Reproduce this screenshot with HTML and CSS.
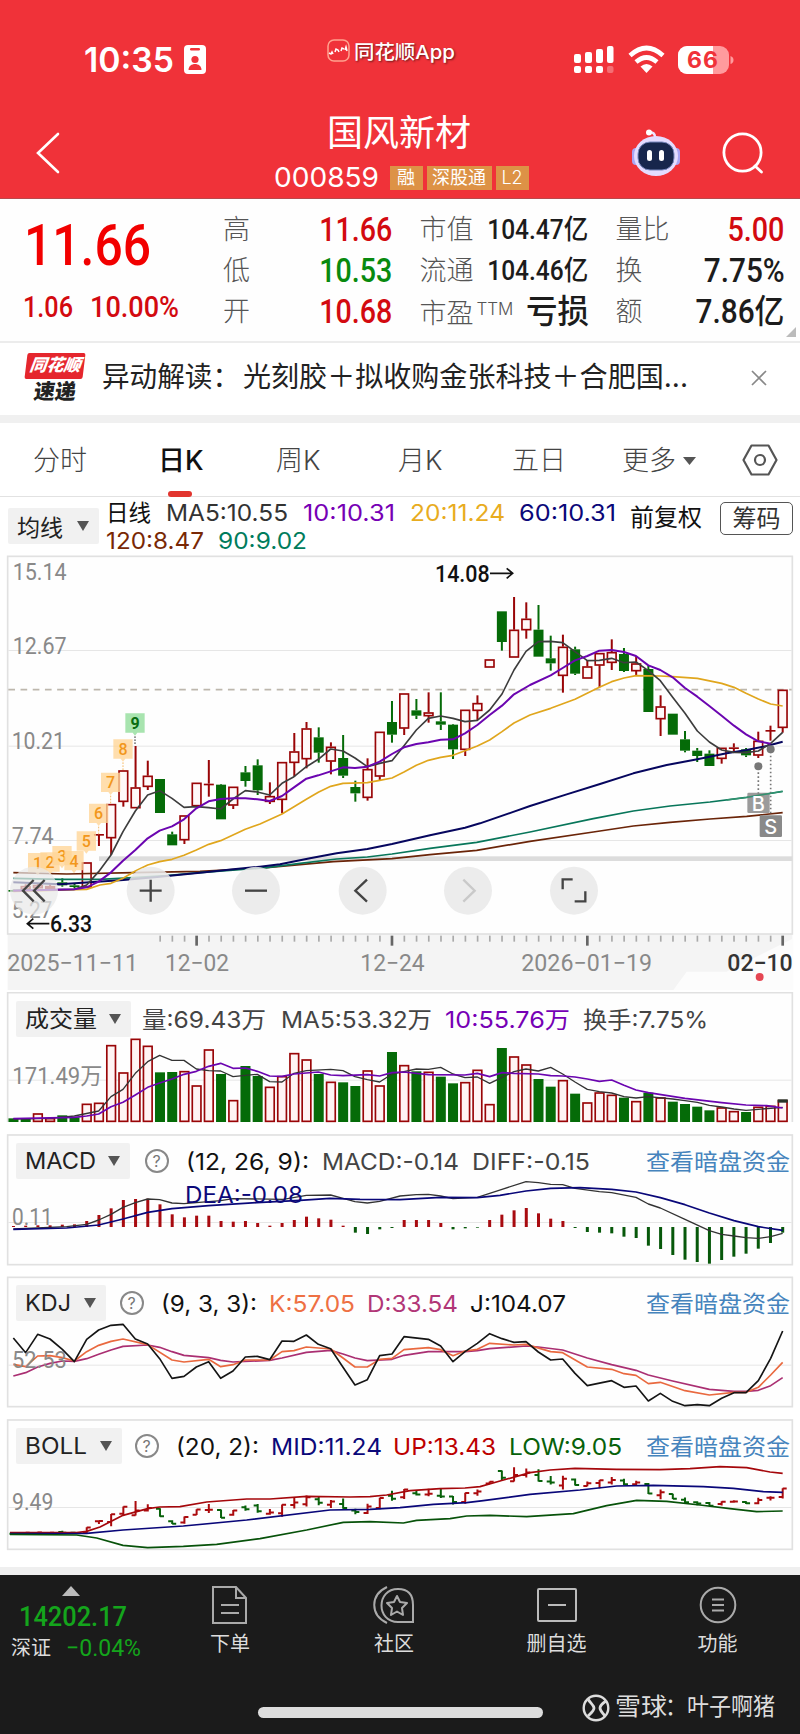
FILE: index.html
```html
<!DOCTYPE html>
<html lang="zh-CN">
<head>
<meta charset="utf-8">
<title>国风新材 000859</title>
<link rel="stylesheet" href="styles.css">
</head>
<body>
<header class="top">
  <div class="status">
    <span class="time" data-w="90">10:35</span>
    <svg class="idcard" width="22" height="29" viewBox="0 0 22 29"><rect width="22" height="29" rx="4" fill="#fff"/><rect x="6" y="3" width="10" height="2.4" rx="1.2" fill="#f03239"/><circle cx="11" cy="14.5" r="3.6" fill="#f03239"/><path d="M4.5 25c0-8 13-8 13 0z" fill="#f03239"/></svg>
    <span class="brand">
      <svg width="23" height="23" viewBox="0 0 23 23"><rect x="1" y="1" width="21" height="21" rx="6" fill="none" stroke="#ffa28f" stroke-width="1.5"/><path d="M2 14l2 1 1-2 1 2M8 13l1-3 2 1 1 2M14 12l1-3 2 1M18 11l1-3 1 4" fill="none" stroke="#fff" stroke-width="1.5"/></svg>
      <span data-w="101">同花顺App</span>
    </span>
    <svg class="signals" width="160" height="30" viewBox="0 0 160 30">
      <g fill="#fff"><rect x="0" y="9" width="7" height="9" rx="2"/><rect x="11" y="7" width="7" height="11" rx="2"/><rect x="22" y="4" width="7" height="14" rx="2"/><rect x="33" y="1" width="6.500" height="17" rx="2"/><rect x="0" y="21" width="7" height="7" rx="2"/><rect x="11" y="21" width="7" height="7" rx="2"/><rect x="22" y="21" width="7" height="7" rx="2"/><rect x="33" y="21" width="6.500" height="7" rx="2" opacity=".3"/></g>
      <g fill="none" stroke="#fff" stroke-width="4.6"><path d="M56 10.500q16.500-15 33 0M62 17q10.500-9 21 0"/></g><path d="M66.500 21.500q6-5 12 0L72.500 28z" fill="#fff"/>
      <rect x="104" y="1" width="51" height="28" rx="9" fill="#ff9b9d"/><path d="M113 1h26v28h-26a9 9 0 0 1-9-9v-10a9 9 0 0 1 9-9z" fill="#fff"/><path d="M156.500 11q3 1 3 4t-3 4z" fill="#ff9b9d"/>
      <text x="113" y="23" font-size="23" font-weight="700" fill="#f03239" textLength="31" font-family="Inter">66</text>
    </svg>
  </div>
  <div class="titlebar">
    <svg class="back" width="24" height="42" viewBox="0 0 24 42"><path d="M22 2L2 21l20 19" fill="none" stroke="#fff" stroke-width="2.600" stroke-linecap="round"/></svg>
    <div class="title">
      <h1>国风新材</h1>
      <div class="code"><span class="num" data-w="105">000859</span><i class="w1">融</i><i class="w3">深股通</i><i class="w1 l2">L2</i></div>
    </div>
    <svg class="robot" width="50" height="48" viewBox="0 0 50 48"><path d="M24 8q0-5-6-5" fill="none" stroke="#eee4ff" stroke-width="2.400"/><circle cx="18" cy="3.500" r="3" fill="#fff"/><rect x="1" y="19" width="9" height="17" rx="4" fill="#a9a5f4"/><rect x="40" y="19" width="9" height="17" rx="4" fill="#a9a5f4"/><ellipse cx="25" cy="27" rx="22" ry="20" fill="#e4dcff"/><rect x="7" y="13" width="36" height="28" rx="12" fill="#17264c" stroke="#7888bd"/><rect x="16" y="21" width="5" height="11" rx="2.500" fill="#fff"/><rect x="28" y="21" width="5" height="11" rx="2.500" fill="#fff"/></svg>
    <svg class="search" width="42" height="42" viewBox="0 0 42 42"><g fill="none" stroke="#fff" stroke-width="2.800" stroke-linecap="round"><circle cx="20.500" cy="20.500" r="18.600"/><path d="M33 34l6.500 6"/></g></svg>
  </div>
</header>

<section class="quote">
  <div class="price">
    <strong data-w="127">11.66</strong>
    <div class="chg"><span data-w="50">1.06</span><span data-w="89">10.00%</span></div>
  </div>
  <dl class="stats">
    <dt>高</dt><dd class="red" data-w="73">11.66</dd><dt>市值</dt><dd class="mid" data-w="101">104.47亿</dd><dt>量比</dt><dd class="red" data-w="57">5.00</dd>
    <dt>低</dt><dd class="green" data-w="73">10.53</dd><dt>流通</dt><dd class="mid" data-w="101">104.46亿</dd><dt>换</dt><dd data-w="81">7.75%</dd>
    <dt>开</dt><dd class="red" data-w="73">10.68</dd><dt>市盈<small>TTM</small></dt><dd data-w="63">亏损</dd><dt>额</dt><dd data-w="89">7.86亿</dd>
  </dl>
  <svg class="corner" width="10" height="10"><path d="M10 0v10H0z" fill="#bbb"/></svg>
</section>

<section class="news">
  <div class="express"><b>同花顺</b><em>速递</em></div>
  <span class="headline"><span data-w="138">异动解读：</span><span data-w="445">光刻胶＋拟收购金张科技＋合肥国...</span></span>
  <svg width="16" height="16" viewBox="0 0 16 16"><path d="M1 1l14 14M15 1L1 15" stroke="#888" stroke-width="1.700"/></svg>
</section>

<nav class="tabs">
  <span>分时</span><span class="on">日K</span><span>周K</span><span>月K</span><span>五日</span><span>更多<svg width="13" height="8"><path d="M0 0h13l-6.500 8z" fill="#555"/></svg></span>
  <svg width="36" height="32" viewBox="0 0 36 32"><path d="M9.500 1.500h17L34.500 16l-8 14.500h-17L1.500 16z" fill="none" stroke="#555" stroke-width="2.200" stroke-linejoin="round"/><circle cx="18" cy="16" r="5" fill="none" stroke="#555" stroke-width="2.200"/></svg>
</nav>

<section class="legend-ma">
  <button class="pick"><span data-w="46">均线</span><i></i></button>
  <div class="ma">
    <div class="ma-row"><span class="k" data-w="45">日线</span><span data-w="122">MA5:10.55</span><span class="purple" data-w="92">10:10.31</span><span class="gold" data-w="95">20:11.24</span><span class="navy" data-w="97">60:10.31</span></div>
    <div class="ma-row two"><span class="brown" data-w="98">120:8.47</span><span class="teal" data-w="89">90:9.02</span></div>
  </div>
  <span class="adj">前复权</span>
  <button class="chip">筹码</button>
</section>

<section class="chart kline"><svg id="k" viewBox="0 0 2400 1320" width="800" height="440"></svg></section>

<section class="chart vol">
  <svg id="v" viewBox="0 186 2400 408" width="800" height="136"></svg>
  <div class="legend"><button class="pick"><span data-w="72">成交量</span><i></i></button><span data-w="124">量:69.43万</span><span data-w="151">MA5:53.32万</span><span class="purple" data-w="125">10:55.76万</span><span data-w="125">换手:7.75%</span></div>
</section>

<section class="chart macd">
  <svg id="m" viewBox="0 12 2400 396" width="800" height="132"></svg>
  <div class="legend"><button class="pick"><span data-w="71">MACD</span><i></i></button><u>?</u><span class="k" data-w="123">(12, 26, 9):</span><span data-w="137">MACD:-0.14</span><span data-w="118">DIFF:-0.15</span><a data-w="144">查看暗盘资金</a></div>
  <span class="dea" data-w="118">DEA:-0.08</span>
</section>

<section class="chart kdj">
  <svg id="j" viewBox="0 438 2400 396" width="800" height="132"></svg>
  <div class="legend"><button class="pick"><span data-w="46">KDJ</span><i></i></button><u>?</u><span class="k" data-w="96">(9, 3, 3):</span><span class="orange" data-w="86">K:57.05</span><span class="pink" data-w="91">D:33.54</span><span class="k" data-w="96">J:104.07</span><a data-w="144">查看暗盘资金</a></div>
</section>

<section class="chart boll">
  <svg id="b" viewBox="0 867 2400 396" width="800" height="132"></svg>
  <div class="legend"><button class="pick"><span data-w="62">BOLL</span><i></i></button><u>?</u><span class="k" data-w="83">(20, 2):</span><span class="navy" data-w="111">MID:11.24</span><span class="crimson" data-w="103">UP:13.43</span><span class="dgreen" data-w="113">LOW:9.05</span><a data-w="144">查看暗盘资金</a></div>
</section>

<footer class="dock">
  <div class="index">
    <svg width="18" height="10"><path d="M9 0l9 10H0z" fill="#bbb"/></svg>
    <b data-w="108">14202.17</b>
    <p><span>深证</span><em data-w="75">−0.04%</em></p>
  </div>
  <div class="item"><svg width="42" height="38" viewBox="0 0 42 38"><g fill="none" stroke="#aaa" stroke-width="2"><path d="M4 1h23l10 11v25H4zM27 1v11h10M12 19h18M12 27h18"/></g></svg>下单</div>
  <div class="item"><svg width="42" height="38" viewBox="0 0 42 38"><g fill="none" stroke="#aaa" stroke-width="2"><path d="M40 36H25C3 36 3 3 25 3c11 0 15 7 15 16zM14 1C-3 9-3 29 14 37"/><path d="M24 10l3 6 7 1-5 5 1 7-6-3.500-6 3.500 1-7-5-5 7-1z" stroke-linejoin="round"/></g></svg>社区</div>
  <div class="item"><svg width="42" height="38" viewBox="0 0 42 38"><g fill="none" stroke="#bbb" stroke-width="2"><rect x="2" y="3" width="38" height="32" rx="1"/><path d="M12 19h18"/></g></svg>删自选</div>
  <div class="item"><svg width="42" height="38" viewBox="0 0 42 38"><g fill="none" stroke="#aaa" stroke-width="2"><circle cx="21" cy="19" r="17.300"/><path d="M15 13.500h12M15 19h12M15 24.500h12"/></g></svg>功能</div>
  <div class="home"></div>
  <div class="author"><svg width="28" height="28" viewBox="0 0 28 28"><g fill="none" stroke="#ddd"><circle cx="14" cy="14" r="12.300" stroke-width="2.400"/><path d="M6 5c2 4 6 6 6 9s-3 5-6 8M24 7c-3 2-6 4-6 7s3 5 5 8" stroke-width="2.800"/></g></svg><b data-w="52">雪球</b><span data-w="110">：叶子啊猪</span></div>
</footer>
<script src="app.js"></script>
</body>
</html>
```

FILE: styles.css
```css
*{box-sizing:border-box}
body{margin:0;width:800px;background:#fff;color:#222;font-family:Inter,"Noto Sans CJK SC",sans-serif}
svg{display:block;flex:none}
button{border:0;padding:0;margin:0;font:inherit;color:inherit;background:none}
i,em{font-style:normal}
[data-w]{display:inline-block;white-space:nowrap;transform-origin:left center}
.top{height:199px;background:#f03239;color:#fff;border-bottom:1px solid #b9494c}
.status{height:112px;padding:45px 0 0 84px;display:flex;align-items:flex-start}
.time{width:90px;font-size:34px;font-weight:600;line-height:30px}
.idcard{margin-left:10px}
.brand{margin:-8px 0 0 121px;display:flex;align-items:center;gap:4px;width:246px;height:26px;font-size:19px;font-weight:500;text-shadow:1px 1px 2px #0008}
.status .signals{margin-left:1px}
.titlebar{display:flex;align-items:flex-start;padding-left:36px}
.back{margin-top:20px}
.title{width:400px;margin-left:139px;text-align:center}
h1{margin:0;font-size:36px;line-height:42px;font-weight:400}
.code{display:flex;justify-content:center;align-items:center;height:24px;margin:12px 0 0 8px}
.code .num{width:106px;font-size:27px;line-height:24px;text-align:left;margin-right:10px}
.code i{height:24px;background:#dd9246;font-size:18px;line-height:23px;margin-right:4px}
.w1{width:33px}.w3{width:65px}
.l2{font-weight:300}
.robot{margin:17px 0 0 32px}
.search{margin:20px 0 0 41px}
.quote{position:relative;height:144px;border-bottom:2px solid #ececec;display:flex;background:#fefefe}
.price{width:223px;padding:15px 0 0 24px;color:#f20000;font-family:Roboto,sans-serif}
.price strong{display:block;width:max-content;font-size:57px;line-height:64px;font-weight:500}
.chg{display:grid;grid-template-columns:67px 100px;justify-items:start;margin:14px 0 0 -1px;font-size:29px;line-height:30px;color:#d30a10;font-weight:500}
.stats{margin:10px 0 0;display:grid;grid-template-columns:80px 89.5px 106px 90px 106px 90px;grid-auto-rows:41px;column-gap:0;align-items:center;align-content:start}
.stats dt{font-size:27px;color:#555;font-weight:300;white-space:nowrap;line-height:40px}
.stats dt:nth-of-type(3n+2),.stats dt:nth-of-type(3n){padding-left:27px}
.stats dt small{font-size:17px;vertical-align:8px;margin-left:3px}
.stats dd{margin:0;justify-self:end;transform-origin:right center;font:500 33px/40px Roboto,"Noto Sans CJK SC",sans-serif;color:#1c1c1c}
.stats dd.mid{font-size:27px}
.stats dd.red{color:#d30a10}.stats dd.green{color:#088a0e}
.corner{position:absolute;right:4px;bottom:4px}
.news{height:72px;display:flex;align-items:center;padding:0 0 3px 25px}
.express{width:60px;margin-right:17px;text-align:center;font-style:italic;font-weight:900}
.express b{display:block;height:26px;margin:0 1px;border-radius:2px;background:#e5262d;color:#fff;transform:skewX(-7deg);font-size:17px;line-height:25px}
.express em{display:block;font-size:21px;line-height:22px;transform:skewX(-8deg);color:#222;padding-top:2px}
.headline{width:649px;font-size:28px;line-height:40px;margin-top:-2px;display:grid;grid-template-columns:141px 500px;justify-items:start}
.tabs{height:82px;border-top:8px solid #f0f0f0;border-bottom:1px solid #e2e2e2;display:grid;grid-template-columns:125px 118px 122px 114px 110px 120px 40px;align-items:center;padding-left:33px;font-size:27px;font-weight:300;color:#444}
.tabs span{display:flex;align-items:center;gap:7px;position:relative;line-height:42px;padding-top:2px}
.tabs .on{font-weight:500;color:#111}
.tabs .on::after{content:"";position:absolute;left:10px;bottom:-15px;width:24px;height:6px;border-radius:3px;background:#e2352e}
.legend-ma{height:59px;display:flex;padding-left:8px;color:#333;font-size:23px}
.pick{display:flex;align-items:center;justify-content:space-between;background:#f1f1f1;border-radius:2px;padding:0 9px 0 9px;height:36px;color:#222;font-size:23px;text-align:left}
.pick i{width:0;border:6.500px solid transparent;border-top:10px solid #555;border-bottom:0;transform:translateX(-1px)}
.legend-ma .pick{width:91px;margin-top:11px}
.ma{width:531px;padding:1px 0 0 7px}
.ma-row{display:grid;grid-template-columns:60px 137px 107px 109px 100px;justify-items:start;line-height:30px;height:28px}
.ma-row.two{grid-template-columns:112px 100px;line-height:31px}
.adj{font-size:24px;line-height:42px;color:#111}
.chip{margin:5px 0 0 18px;width:73px;height:33px;border:1.500px solid #555;border-radius:5px;font-size:24px;line-height:28px}
.k{color:#111}.purple{color:#7600b5}.gold{color:#e8ac1f}.navy{color:#0b0879}.brown{color:#792805}.teal{color:#007c5c}.orange{color:#ee7043}.pink{color:#b13677}.crimson{color:#bd0000}.dgreen{color:#07610a}
.chart{position:relative}
.chart>svg{position:absolute;left:0;top:0}
.kline{height:436px}.kline>svg{top:-6px}
.vol{height:142px}.macd{height:142px}.kdj{height:143px}.boll{height:148px}
.legend{position:relative;display:grid;align-items:center;justify-items:start;margin-left:15.500px;height:36px;top:9px;font-size:23px;color:#444;line-height:34px}
.legend>[data-w]{padding-top:2px}
.legend .pick{justify-self:stretch}
.legend u{width:24px;height:24px;border:2px solid #888;border-radius:50%;text-decoration:none;font-size:16px;line-height:20px;text-align:center;color:#777}
.legend a{color:#4684bd}
.vol .legend{grid-template-columns:115px 11px 139px 164px 138px 130px}
.vol .legend>:nth-child(n+2){grid-row:1}
.vol .legend>:nth-child(2){grid-column:3}.vol .legend>:nth-child(3){grid-column:4}.vol .legend>:nth-child(4){grid-column:5}.vol .legend>:nth-child(5){grid-column:6}
.macd .pick{width:114px}.kdj .pick{width:90px}.boll .pick{width:106px}
.macd .legend{grid-template-columns:129px 41px 136px 150px 174px 144px}
.kdj .legend{grid-template-columns:104px 41px 108px 98px 103px 176px 144px}
.boll .legend{grid-template-columns:119px 41px 95px 122px 116px 137px 144px}
.dea{position:absolute;left:185px;top:45px;font-size:23px;line-height:32px;color:#0b0879}
.dock{position:relative;height:167px;border-top:8px solid #efefef;background:#1b1b1b;display:grid;grid-template-columns:148px 164px 164px 161px 161px;color:#ddd;font-size:20px}
.index{padding:11px 0 0 11px;color:#14a51c;font-family:Roboto,"Noto Sans CJK SC",sans-serif}
.index svg{margin-left:51px}
.index b{font-size:27px;font-weight:500;line-height:30px;margin:6px 0 0 8px}
.index p{margin:0;display:flex;line-height:32px}
.index p span{color:#ddd;width:55px}.index em{font-size:24px}
.item{display:flex;flex-direction:column;align-items:center;padding-top:11px;line-height:41px}
.home{position:absolute;left:258px;top:132px;width:285px;height:11px;border-radius:6px;background:#ddd}
.author{position:absolute;left:582px;top:119px;display:flex;align-items:center;height:28px;line-height:26px;font-size:24px}
.author b{margin:-2px 0 0 5px;width:50px;font-weight:400}
.author span{margin-top:-2px}
svg .ax{font-family:Roboto,"Noto Sans CJK SC",sans-serif;font-size:69px;fill:#898989}
svg .ink{fill:#111;font-weight:500}
svg .dark{fill:#333}
```

FILE: app.js
```js
// Condense text to the advance width declared in data-w.
function fitText() {
  document.querySelectorAll('[data-w]').forEach(function (el) {
    var r = document.createRange();
    r.selectNodeContents(el);
    el.style.transform = 'scaleX(' + (el.dataset.w / r.getBoundingClientRect().width) + ')';
  });
}
fitText();

var RED = '#990507', GREEN = '#056b08';
function X(i) { return 40.4 + 36.63 * i; }
function put(id, s) { document.getElementById(id).innerHTML = s; }
function rect(x, y, w, h, a) { return '<rect x="' + x + '" y="' + y + '" width="' + w + '" height="' + h + '" ' + a + '/>'; }
function line(p, c, w) { return '<polyline points="' + p + '" fill="none" stroke="' + c + '" stroke-width="' + (w || 5) + '" stroke-linejoin="round"/>'; }
function text(t, x, y, w, c) { return '<text class="' + (c || 'ax') + '" x="' + x + '" y="' + y + '" textLength="' + w + '" lengthAdjust="spacingAndGlyphs">' + t + '</text>'; }
function frame(y1, y2) { return rect(23, y1, 2354, y2 - y1, 'fill="#fefefe" stroke="#e1e1e1" stroke-width="5"'); }
function grid(y) { return rect(25, y, 2350, 3, 'fill="#e6e6e6"'); }

// direction, high, body top, body bottom, low
var K = ('g 1019 1020 1024 1026,r 1003 1008 1018 1018,r 1000 1005 1014 1017,r 1003 1008 1016 1018,g 985 997 1006 1010,g 1000 1006 1010 1015,r 937 937 1012 1012,r 852 852 855 888,r 762 762 864 915,r 661 661 755 770,r 588 712 774 774,' +
'r 632 677 710 720,g 687 687 789 789,g 845 853 886 886,r 796 796 870 882,r 698 698 768 768,r 630 701 703 740,g 702 704 808 808,r 710 710 766 777,g 648 667 693 710,g 628 646 721 735,' +
'r 697 738 755 762,r 636 636 749 790,r 549 604 638 680,r 516 535 627 655,g 532 562 608 638,r 577 590 634 673,g 555 624 677 684,g 692 711 730 755,r 625 657 743 752,r 545 545 679 690,' +
'g 453 516 554 578,r 430 430 535 555,g 447 481 497 507,r 427 487 498 518,g 427 514 524 540,g 522 524 598 627,r 479 479 599 618,r 436 459 482 510,r 328 328 352 352,g 184 184 276 302,' +
'r 141 239 322 322,r 157 206 240 266,g 165 239 320 320,g 257 325 340 362,r 254 290 377 428,g 290 298 371 375,r 330 349 385 385,r 309 309 346 412,r 268 306 338 360,g 294 312 363 366,' +
'r 318 340 363 375,g 348 357 486 486,r 436 469 507 558,g 491 491 554 554,g 543 568 602 607,g 594 602 618 636,g 601 611 648 648,r 593 593 626 641,r 580 592 594 605,g 594 598 616 621,' +
'r 545 572 616 624,r 527 540 542 572,r 419 419 533 548').split(',').map(function (s) {
  var p = s.split(' '); return { d: p[0], h: +p[1], t: +p[2], b: +p[3], l: +p[4] };
});

// Main chart
(function () {
  var s = rect(23, 1152, 2354, 170, 'fill="#f4f4f4"') + '<path d="M2380 1165V1320H2020L2060 1265H2180z" fill="#fcfcfc"/>' + frame(19, 1152);
  [300, 587, 870].forEach(function (y) { s += grid(y); });
  s += '<path d="M25 419H2375" stroke="#bdb7ad" stroke-width="5" stroke-dasharray="20 16.600"/>';
  s += rect(297, 919, 2080, 14, 'fill="#dcdcdc"');
  K.forEach(function (k, i) {
    var x = X(i), c = k.d === 'r' ? RED : GREEN;
    if (k.h < k.t) s += rect(x - 3, k.h, 6, k.t - k.h, 'fill="' + c + '"');
    if (k.l > k.b) s += rect(x - 3, k.b, 6, k.l - k.b, 'fill="' + c + '"');
    if (k.d === 'g' || k.b - k.t < 6) s += rect(x - 15, k.t, 30, Math.max(5, k.b - k.t), 'fill="' + c + '"');
    else s += rect(x - 13, k.t + 2, 26, k.b - k.t - 3, 'fill="#fff8f8" stroke="' + c + '" stroke-width="5"');
  });
  s += line('40,968 200,972 400,968 600,964 800,953 1000,935 1176,926 1290,914 1430,901 1590,874 1780,846 1900,828 2010,817 2130,807 2240,799 2348,788', '#6a2408');
  s += line('40,985 180,988 300,988 400,983 500,977 600,968 800,953 900,940 1010,927 1102,921 1176,912 1290,895 1430,877 1590,846 1780,806 1900,783 2010,768 2130,756 2240,742 2348,724', '#08765a');
  s += line('40,997 180,1003 370,990 480,980 600,968 700,958 780,950 840,943 930,925 1010,910 1102,897 1176,882 1290,856 1395,833 1440,820 1542,785 1590,768 1700,733 1800,702 1900,670 2000,645 2092,628 2180,610 2240,600 2300,588 2348,575', '#06065e', 6);
  s += line('40,1024 223,1019 260,1018 300,1005 333,1000 369,985 406,963 443,945 479,935 516,928 552,916 589,900 626,883 662,872 736,838 780,822 846,792 882,770 919,748 955,727 992,709 1029,700 1102,698 1139,691 1176,684 1212,666 1249,646 1285,631 1322,622 1359,616 1395,602 1432,588 1469,570 1506,545 1542,519 1590,495 1652,475 1725,448 1798,412 1835,395 1872,384 1908,377 1981,378 2018,380 2092,385 2165,400 2202,412 2238,430 2275,447 2312,462 2348,468', '#e0a61d');
  s += line('40,1021 223,1018 260,1005 296,965 333,915 369,845 406,783 443,735 479,722 516,745 552,772 589,770 626,773 662,777 699,747 736,722 772,726 809,735 846,700 882,680 919,650 955,628 992,597 1029,603 1065,624 1102,650 1139,640 1176,632 1212,587 1249,540 1285,505 1322,498 1359,505 1395,515 1432,511 1469,480 1506,432 1542,360 1578,304 1615,275 1652,274 1688,278 1725,305 1762,332 1798,331 1835,325 1872,338 1908,336 1945,362 1981,392 2018,442 2055,490 2092,543 2128,576 2165,600 2202,607 2238,608 2275,603 2312,580 2348,547', '#3d3d3d');
  s += line('40,1022 223,1018 260,1012 296,995 333,967 369,932 406,900 443,865 479,842 516,829 552,808 589,775 626,754 662,747 699,745 736,745 772,748 809,753 846,738 882,712 919,686 955,676 992,664 1029,652 1065,654 1102,650 1139,635 1176,612 1212,592 1249,582 1285,577 1322,569 1359,568 1395,550 1432,525 1469,495 1506,467 1542,433 1590,405 1652,376 1688,354 1725,331 1762,318 1798,302 1835,300 1872,306 1908,318 1945,346 1981,360 2018,382 2055,414 2092,440 2128,468 2165,497 2202,527 2238,553 2275,574 2312,581', '#6b05b0', 6);
  [[113, 938], [150, 936], [186, 917], [222, 932], [259, 873], [296, 790], [332, 697], [369, 597], [405, 519]].forEach(function (p, i) {
    var g = i === 8, x = p[0], y = p[1];
    s += '<path d="M' + (x - 29) + ' ' + (y - 29) + 'h58v58h-22l-7 9l-7-9h-22z" fill="' + (g ? '#8fdc99' : '#ffd596') + '" opacity=".78"/>';
    s += '<text x="' + x + '" y="' + (y + 18) + '" text-anchor="middle" font-family="Roboto" font-size="48" font-weight="' + (g ? 700 : 500) + '" fill="' + (g ? '#0a6d12' : '#f2971b') + '">' + (i + 1) + '</text>';
    if (i > 4) s += '<path d="M' + x + ' ' + (y + 40) + 'v24" stroke="' + (g ? '#333' : '#f5bb68') + '" stroke-width="3" stroke-dasharray="5 4"/>';
  });
  s += text('15.14', 38, 91, 162) + text('12.67', 38, 312, 162) + text('10.21', 35, 597, 160) + text('7.74', 35, 882, 126) + text('5.27', 35, 1105, 122);
  s += text('6.33', 150, 1145, 126, 'ax ink') + text('14.08', 1305, 95, 164, 'ax ink');
  s += '<path d="M148 1121H82m18-15L82 1121l18 15M1470 70h68m-18-15l18 15l-18 15" fill="none" stroke="#111" stroke-width="5"/>';
  // Trade markers
  s += '<g stroke="#777" stroke-width="5" stroke-dasharray="5 7"><path d="M2275 655v80M2312 605v190"/></g><circle cx="2275" cy="649" r="12" fill="#777"/><circle cx="2312" cy="598" r="12" fill="#777"/>';
  s += rect(2242, 728, 67, 61, 'rx="4" fill="#898989" opacity=".85"') + rect(2279, 796, 67, 65, 'rx="4" fill="#898989"');
  s += line('2180,750 2240,742 2348,724', '#31936f', 4);
  s += '<g font-family="Inter" font-size="60" font-weight="500" fill="#fff" text-anchor="middle"><text x="2275" y="783">B</text><text x="2312" y="852">S</text></g>';
  // Floating controls
  ['M65-32L33 0L65 32M32-32L0 0L32 32', 'M-33 0H33M0-33V33', 'M-33 0H33', 'M13-33L-22 0L13 33', 'M-14-33L20 0L-14 33', 'M-34-4V-34H-4M2 32H34V2'].forEach(function (d, i) {
    var x = [102, 452, 768, 1088, 1404, 1722][i];
    s += '<g transform="translate(' + x + ' 1022)"><circle r="72" fill="#e9e9e9" opacity="' + (i ? '.86' : '.72') + '"/><path d="' + d + '" transform="' + (i ? '' : 'translate(-33 0)') + '" fill="none" stroke="' + (i === 4 ? '#c9c9c9' : '#444') + '" stroke-width="7"/></g>';
  });
  for (var i = 12; i < 64; i++) {
    var major = i === 15 || i === 31 || i === 47 || i === 63;
    s += rect(X(i) - (major ? 4 : 2), 1157, major ? 8 : 5, major ? 30 : 18, 'fill="' + (major ? '#666' : '#aaa') + '"');
  }
  s += text('2025−11−11', 22, 1262, 392) + text('12−02', 495, 1262, 192) + text('12−24', 1081, 1262, 193) + text('2026−01−19', 1564, 1262, 392) + text('02−10', 2182, 1262, 196, 'ax ink dark');
  s += '<circle cx="2279" cy="1281" r="12" fill="#e54653"/>';
  put('k', s);
})();

// Volume
(function () {
  var tops = [565,566,550,564,556,562,521,518,345,427,326,347,427,426,423,466,358,432,510,408,438,470,438,369,388,432,455,457,468,421,466,366,405,424,425,440,460,456,419,522,354,379,403,447,470,450,491,517,487,494,503,513,488,502,515,522,530,541,532,543,546,530,527,510];
  var green = [0,1,4,5,12,13,17,19,20,25,27,28,31,33,35,36,40,43,44,46,50,52,54,55,56,57,60];
  var s = '<path d="M23 576V188H2377V576" fill="#fefefe" stroke="#e1e1e1" stroke-width="5"/>' + grid(449);
  tops.forEach(function (t, i) {
    var g = green.indexOf(i) >= 0, x = X(i);
    s += g ? rect(x - 15, t, 30, 576 - t, 'fill="' + GREEN + '"') : rect(x - 13, t + 2, 26, 572 - t, 'fill="#fff4f4" stroke="' + RED + '" stroke-width="5"');
  });
  s += rect(X(63) - 15, 508, 30, 10, 'fill="#26352a"');
  s += line('40,567 150,565 223,558 296,543 333,500 369,478 406,430 443,395 479,376 516,391 552,391 589,417 626,422 662,423 699,440 736,436 772,433 809,455 846,456 882,430 919,422 992,418 1029,422 1065,440 1102,449 1139,456 1176,432 1212,425 1249,417 1285,418 1322,412 1359,432 1395,443 1432,441 1469,460 1506,442 1542,425 1578,417 1615,423 1652,412 1688,432 1725,456 1762,478 1798,485 1835,489 1872,500 1908,504 1945,500 2018,507 2055,512 2092,517 2128,526 2165,531 2202,537 2238,541 2275,538 2348,532', '#333', 4);
  s += line('40,566 223,562 260,558 296,552 333,530 369,517 406,495 443,472 479,459 516,447 552,433 589,424 626,409 662,400 699,415 736,414 772,424 809,438 846,439 882,432 955,426 992,435 1029,437 1102,434 1139,438 1176,428 1212,426 1285,434 1395,435 1432,430 1469,440 1506,428 1542,430 1615,432 1652,437 1688,438 1725,441 1762,447 1798,454 1835,450 1872,466 1908,480 1945,488 2055,505 2165,518 2238,525 2300,527 2348,534', '#6b05b0');
  put('v', s + text('171.49万', 37, 461, 270));
})();

// MACD
(function () {
  var v = [288,287,286,286,284,283,273,255,235,210,207,206,223,253,262,257,257,273,275,273,279,287,279,270,260,265,269,287,308,312,298,294,270,270,270,279,298,295,293,270,254,241,234,250,266,273,294,306,308,310,320,324,347,357,375,389,396,401,390,380,371,356,339,308];
  var s = frame(15, 404) + grid(276) + text('0.11', 36, 286, 122);
  v.forEach(function (y, i) { s += rect(X(i) - 4.5, Math.min(y, 291), 9, Math.abs(291 - y), 'fill="' + (y < 290 ? '#a80b10' : '#07580a') + '"'); });
  s += line('40,297 200,290 260,283 296,270 333,253 369,232 406,218 443,207 479,209 516,219 552,221 662,212 699,206 850,208 880,203 919,196 992,195 1029,205 1065,215 1102,219 1139,214 1200,198 1249,194 1285,193 1322,198 1359,206 1432,202 1469,190 1506,178 1578,155 1615,158 1652,163 1688,164 1725,175 1798,185 1835,188 1908,202 1945,222 1981,234 2055,268 2128,302 2165,313 2202,318 2238,323 2275,325 2312,320 2348,310', '#333', 4);
  s += line('40,298 200,294 296,285 369,267 443,247 516,236 626,227 770,218 900,211 990,205 1080,208 1200,209 1322,202 1432,203 1500,196 1578,183 1652,175 1740,173 1835,178 1908,186 1981,203 2055,224 2128,249 2202,272 2275,290 2348,301', '#090779');
  put('m', s);
})();

// KDJ
put('j', frame(442, 830) + grid(704) +
  line('40,738 77,728 113,711 150,700 187,693 223,694 260,686 296,673 333,660 369,649 443,645 479,652 516,665 552,676 626,683 662,691 699,696 809,691 846,684 919,667 992,661 1029,672 1065,684 1102,692 1176,688 1212,676 1285,665 1395,665 1432,662 1469,656 1578,648 1615,651 1688,660 1762,684 1835,704 1908,721 1945,735 2018,753 2128,778 2202,784 2238,784 2275,781 2312,767 2348,743', '#aa2f72') +
  line('40,703 77,710 113,678 150,677 187,683 223,693 260,665 296,646 333,634 369,627 443,644 516,690 552,696 626,688 662,710 699,704 736,690 809,690 846,665 882,662 919,651 992,657 1029,684 1065,711 1102,711 1139,688 1176,685 1212,659 1285,653 1322,659 1359,677 1395,663 1432,658 1469,640 1542,645 1578,643 1652,665 1688,668 1762,711 1835,718 1872,731 1908,736 1945,761 1981,757 2055,782 2128,795 2202,787 2238,787 2275,772 2312,735 2348,697', '#e9693f') +
  line('40,624 77,668 113,613 150,627 187,658 223,695 260,628 296,600 333,586 369,583 406,627 443,642 479,686 516,745 552,739 589,711 626,695 662,745 699,723 736,681 772,679 809,689 846,633 882,634 919,615 955,643 992,656 1029,712 1065,765 1102,749 1139,677 1176,672 1212,620 1285,628 1322,648 1359,695 1395,665 1432,640 1469,611 1506,626 1542,637 1578,635 1615,666 1652,690 1688,687 1725,730 1762,767 1835,752 1872,772 1908,768 1945,813 1981,790 2018,814 2055,827 2092,824 2128,827 2165,805 2202,788 2238,788 2275,752 2312,685 2348,603', '#151515') +
  text('52.53', 36, 713, 164));

// BOLL with open/close ticks mapped from the daily candles
(function () {
  var s = frame(870, 1258) + grid(1131) + text('9.49', 36, 1141, 124);
  function Y(y) { return 1013 + (y - 141) * 0.2254; }
  K.forEach(function (k, i) {
    var x = X(i), o = Y(k.d === 'r' ? k.b : k.t), c = Y(k.d === 'r' ? k.t : k.b);
    s += '<path d="M' + (x - 12) + ' ' + o + 'H' + x + 'M' + x + ' ' + (Y(k.h) - 1) + 'V' + (Y(k.l) + 1) + 'M' + x + ' ' + c + 'h12" stroke="' + (k.d === 'r' ? '#ab0a0d' : '#07610a') + '" stroke-width="6"/>';
  });
  s += line('30,1208 230,1208 260,1204 300,1191 369,1156 443,1136 479,1131 540,1130 620,1116 740,1107 810,1107 920,1099 1050,1101 1110,1100 1160,1095 1230,1082 1320,1076 1395,1074 1440,1070 1500,1053 1590,1028 1650,1020 1725,1015 1850,1018 1980,1019 2070,1016 2160,1010 2240,1013 2310,1026 2348,1030', '#a5070b');
  s += line('30,1211 260,1210 369,1200 550,1188 740,1170 990,1140 1110,1138 1200,1133 1300,1123 1400,1118 1450,1112 1590,1093 1740,1080 1850,1068 1960,1066 2110,1070 2200,1075 2290,1085 2348,1087', '#090779');
  s += line('30,1213 230,1215 290,1224 369,1246 443,1253 550,1249 650,1243 780,1226 920,1200 1030,1177 1110,1175 1210,1179 1250,1171 1350,1166 1400,1158 1470,1156 1580,1160 1720,1151 1820,1127 1910,1111 2000,1114 2100,1125 2190,1136 2270,1145 2348,1143', '#07520a');
  put('b', s);
})();
```
